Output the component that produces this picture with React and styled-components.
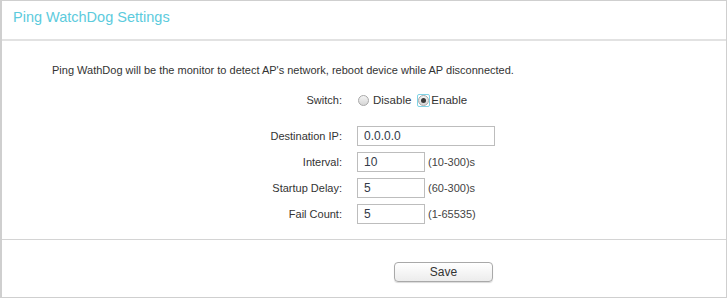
import styled, { createGlobalStyle } from "styled-components";

const GlobalStyle = createGlobalStyle`
  html, body {
    margin: 0;
    padding: 0;
    background: #fff;
  }
  body {
    font-family: "Liberation Sans", Arial, sans-serif;
    font-size: 11px;
    color: #333;
  }
`;

const Panel = styled.div`
  box-sizing: border-box;
  width: 727px;
  height: 298px;
  border: 1px solid #cfcfcf;
  border-left-width: 2px;
  display: flex;
  flex-direction: column;
`;

const Header = styled.div`
  height: 40px;
  border-bottom: 2px solid #e2e2e2;
  padding: 6px 0 0 11px;
  box-sizing: border-box;

  h2 {
    margin: 0;
    font-size: 14.5px;
    font-weight: normal;
    line-height: 20px;
    color: #5ccbdd;
  }
`;

const Content = styled.div`
  height: 199px;
  border-bottom: 1px solid #d4d4d4;
  padding: 21px 0 0 50px;
  box-sizing: border-box;
`;

const Intro = styled.p`
  margin: 0;
  line-height: 16px;
`;

const Form = styled.div`
  display: grid;
  grid-template-columns: 290px auto;
  column-gap: 15px;
  row-gap: 6px;
  margin-top: 12px;
  align-items: center;
`;

const Label = styled.div`
  text-align: right;
  line-height: 20px;
  margin-top: ${(p) => p.$offset || 0}px;
`;

const Field = styled.div`
  display: flex;
  align-items: center;
  height: 20px;
  margin-top: ${(p) => p.$offset || 0}px;
`;

const Input = styled.input`
  box-sizing: border-box;
  width: ${(p) => p.$width}px;
  height: 20px;
  border: 1px solid #bdbdbd;
  padding: 0 6px;
  font-family: "Liberation Sans", Arial, sans-serif;
  font-size: 12px;
  color: #343a48;
  outline: none;
`;

const Hint = styled.span`
  margin-left: 3px;
  color: #444;
`;

const RadioWrap = styled.span`
  display: inline-flex;
  align-items: center;
  justify-content: center;
  width: 13px;
  height: 13px;
  border-radius: 2px;
  box-sizing: border-box;
  border: 1px solid ${(p) => (p.$focused ? "#7fd3e6" : "transparent")};
  margin-right: ${(p) => (p.$focused ? 1 : 3)}px;
`;

const RadioDot = styled.span`
  box-sizing: border-box;
  width: 11px;
  height: 11px;
  border-radius: 50%;
  border: 1px solid #a8a8a8;
  background: linear-gradient(#f4f4f4, #d6d6d6);
  display: flex;
  align-items: center;
  justify-content: center;

  &::after {
    content: "";
    display: ${(p) => (p.$checked ? "block" : "none")};
    width: 5px;
    height: 5px;
    border-radius: 50%;
    background: #3a3a3a;
  }
`;

const RadioLabel = styled.span`
  margin-right: 6px;
  font-size: 11.5px;
`;

const Footer = styled.div`
  padding: 22px 0 0 392px;
`;

const SaveButton = styled.button`
  width: 99px;
  height: 20px;
  border: 1px solid #a9a9a9;
  border-radius: 4px;
  background: linear-gradient(#ffffff, #ececec);
  box-shadow: 0 1px 1px rgba(0, 0, 0, 0.15);
  font-family: "Liberation Sans", Arial, sans-serif;
  font-size: 12px;
  color: #333;
  padding: 0;
`;

function Radio({ label, checked, focused }) {
  return (
    <>
      <RadioWrap $focused={focused}>
        <RadioDot $checked={checked} />
      </RadioWrap>
      <RadioLabel>{label}</RadioLabel>
    </>
  );
}

const FIELDS = [
  { label: "Destination IP:", value: "0.0.0.0", width: 138, offset: 10 },
  { label: "Interval:", value: "10", width: 68, hint: "(10-300)s" },
  { label: "Startup Delay:", value: "5", width: 68, hint: "(60-300)s" },
  { label: "Fail Count:", value: "5", width: 68, hint: "(1-65535)" },
];

export default function App() {
  return (
    <>
      <GlobalStyle />
      <Panel>
        <Header>
          <h2>Ping WatchDog Settings</h2>
        </Header>
        <Content>
          <Intro>
            Ping WathDog will be the monitor to detect AP's network, reboot device while AP
            disconnected.
          </Intro>
          <Form>
            <Label>Switch:</Label>
            <Field>
              <Radio label="Disable" />
              <Radio label="Enable" checked focused />
            </Field>
            {FIELDS.map((f) => (
              <>
                <Label key={f.label + "l"} $offset={f.offset}>
                  {f.label}
                </Label>
                <Field key={f.label + "f"} $offset={f.offset}>
                  <Input $width={f.width} defaultValue={f.value} />
                  {f.hint && <Hint>{f.hint}</Hint>}
                </Field>
              </>
            ))}
          </Form>
        </Content>
        <Footer>
          <SaveButton>Save</SaveButton>
        </Footer>
      </Panel>
    </>
  );
}
